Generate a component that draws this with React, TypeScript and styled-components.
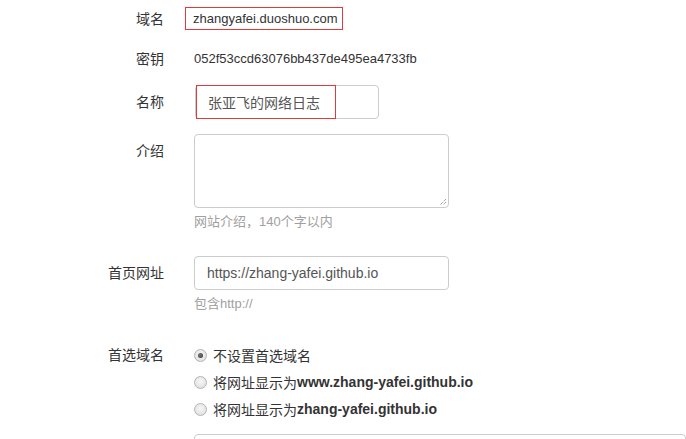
import React from "react";
import styled, { createGlobalStyle } from "styled-components";

const Global = createGlobalStyle`
  html, body { margin: 0; padding: 0; background: #fff; }
  body {
    font-family: "Liberation Sans", Arial, "Noto Sans CJK SC", sans-serif;
    color: #333;
    overflow: hidden;
  }
`;

const Form = styled.div`
  display: flex;
  flex-direction: column;
  width: 686px;
  height: 439px;
  overflow: hidden;
`;

const Row = styled.div<{ $mt: number; $center?: boolean }>`
  display: flex;
  align-items: ${(p) => (p.$center ? "center" : "flex-start")};
  gap: 30px;
  margin-top: ${(p) => p.$mt}px;
`;

const Label = styled.div<{ $pt?: number }>`
  width: 164px;
  flex: none;
  text-align: right;
  font-size: 14px;
  line-height: 20px;
  color: #333;
  padding-top: ${(p) => p.$pt ?? 0}px;
`;

const Control = styled.div`
  display: flex;
  flex-direction: column;
`;

const Static = styled.div`
  font-size: 13px;
  line-height: 20px;
  color: #333;
`;

const RedBox = styled.span`
  display: inline-block;
  border: 1px solid #dd3c3c;
  margin-left: -9px;
  padding: 0 4px 0 7px;
  font-size: 13px;
  line-height: 21px;
  color: #333;
`;

const Field = styled.div`
  position: relative;
`;

const Input = styled.div<{ $w: number; $shift?: number }>`
  box-sizing: border-box;
  width: ${(p) => p.$w}px;
  height: 34px;
  margin-left: ${(p) => p.$shift ?? 0}px;
  border: 1px solid #ccc;
  border-radius: 4px;
  padding: 0 12px;
  display: flex;
  align-items: center;
  font-size: 14px;
  color: #555;
  font-family: "Liberation Sans", Arial, "Noto Sans CJK SC", sans-serif;
  background: #fff;
`;

const Highlight = styled.div`
  position: absolute;
  left: 2px;
  top: 0;
  width: 140px;
  height: 34px;
  box-sizing: border-box;
  border: 1px solid #dd3c3c;
  pointer-events: none;
`;

const TextArea = styled.div`
  position: relative;
  box-sizing: border-box;
  width: 255px;
  height: 74px;
  border: 1px solid #ccc;
  border-radius: 4px;
  background: #fff;
`;

const Grip = styled.svg`
  position: absolute;
  right: 1px;
  bottom: 1px;
`;

const Help = styled.div`
  margin-top: 5px;
  margin-bottom: 10px;
  font-size: 13px;
  line-height: 18px;
  color: #a0a0a0;
`;

const Radios = styled.div`
  display: flex;
  flex-direction: column;
  gap: 7px;
  padding-top: 7px;
`;

const RadioRow = styled.div`
  display: flex;
  align-items: center;
  height: 20px;
  font-size: 14px;
  color: #333;
`;

const Dot = styled.span<{ $on?: boolean }>`
  position: relative;
  box-sizing: border-box;
  width: 13px;
  height: 13px;
  border-radius: 50%;
  border: 1px solid #b4b4b4;
  background: radial-gradient(circle at 50% 40%, #f6f6f6 0%, #e6e6e6 60%, #d8d8d8 100%);
  margin-right: 6px;
  flex: none;
  &::after {
    content: "";
    display: ${(p) => (p.$on ? "block" : "none")};
    position: absolute;
    left: 3px;
    top: 3px;
    width: 5px;
    height: 5px;
    border-radius: 50%;
    background: radial-gradient(circle at 40% 40%, #777 0%, #333 100%);
  }
`;

const Bold = styled.b`
  font-weight: bold;
  color: #333;
`;

const BottomInput = styled.div`
  box-sizing: border-box;
  width: 520px;
  height: 34px;
  border: 1px solid #ccc;
  border-radius: 4px;
`;

export default function App() {
  return (
    <>
      <Global />
      <Form>
        <Row $mt={7} $center>
          <Label>域名</Label>
          <Control>
            <RedBox>zhangyafei.duoshuo.com</RedBox>
          </Control>
        </Row>
        <Row $mt={19} $center>
          <Label>密钥</Label>
          <Static>052f53ccd63076bb437de495ea4733fb</Static>
        </Row>
        <Row $mt={16} $center>
          <Label>名称</Label>
          <Field>
            <Input $w={184} $shift={1}>张亚飞的网络日志</Input>
            <Highlight />
          </Field>
        </Row>
        <Row $mt={15}>
          <Label $pt={7}>介绍</Label>
          <Control>
            <TextArea>
              <Grip width="9" height="9" viewBox="0 0 9 9">
                <path d="M8 2 L2 8 M8 5 L5 8" stroke="#777" strokeWidth="1" strokeDasharray="1 1" />
              </Grip>
            </TextArea>
            <Help>网站介绍，140个字以内</Help>
          </Control>
        </Row>
        <Row $mt={15}>
          <Label $pt={7}>首页网址</Label>
          <Control>
            <Input $w={255}>https://zhang-yafei.github.io</Input>
            <Help>包含http://</Help>
          </Control>
        </Row>
        <Row $mt={15}>
          <Label $pt={7}>首选域名</Label>
          <Radios>
            <RadioRow>
              <Dot $on />
              不设置首选域名
            </RadioRow>
            <RadioRow>
              <Dot />
              将网址显示为<Bold>www.zhang-yafei.github.io</Bold>
            </RadioRow>
            <RadioRow>
              <Dot />
              将网址显示为<Bold>zhang-yafei.github.io</Bold>
            </RadioRow>
          </Radios>
        </Row>
        <Row $mt={15}>
          <Label />
          <BottomInput />
        </Row>
      </Form>
    </>
  );
}
